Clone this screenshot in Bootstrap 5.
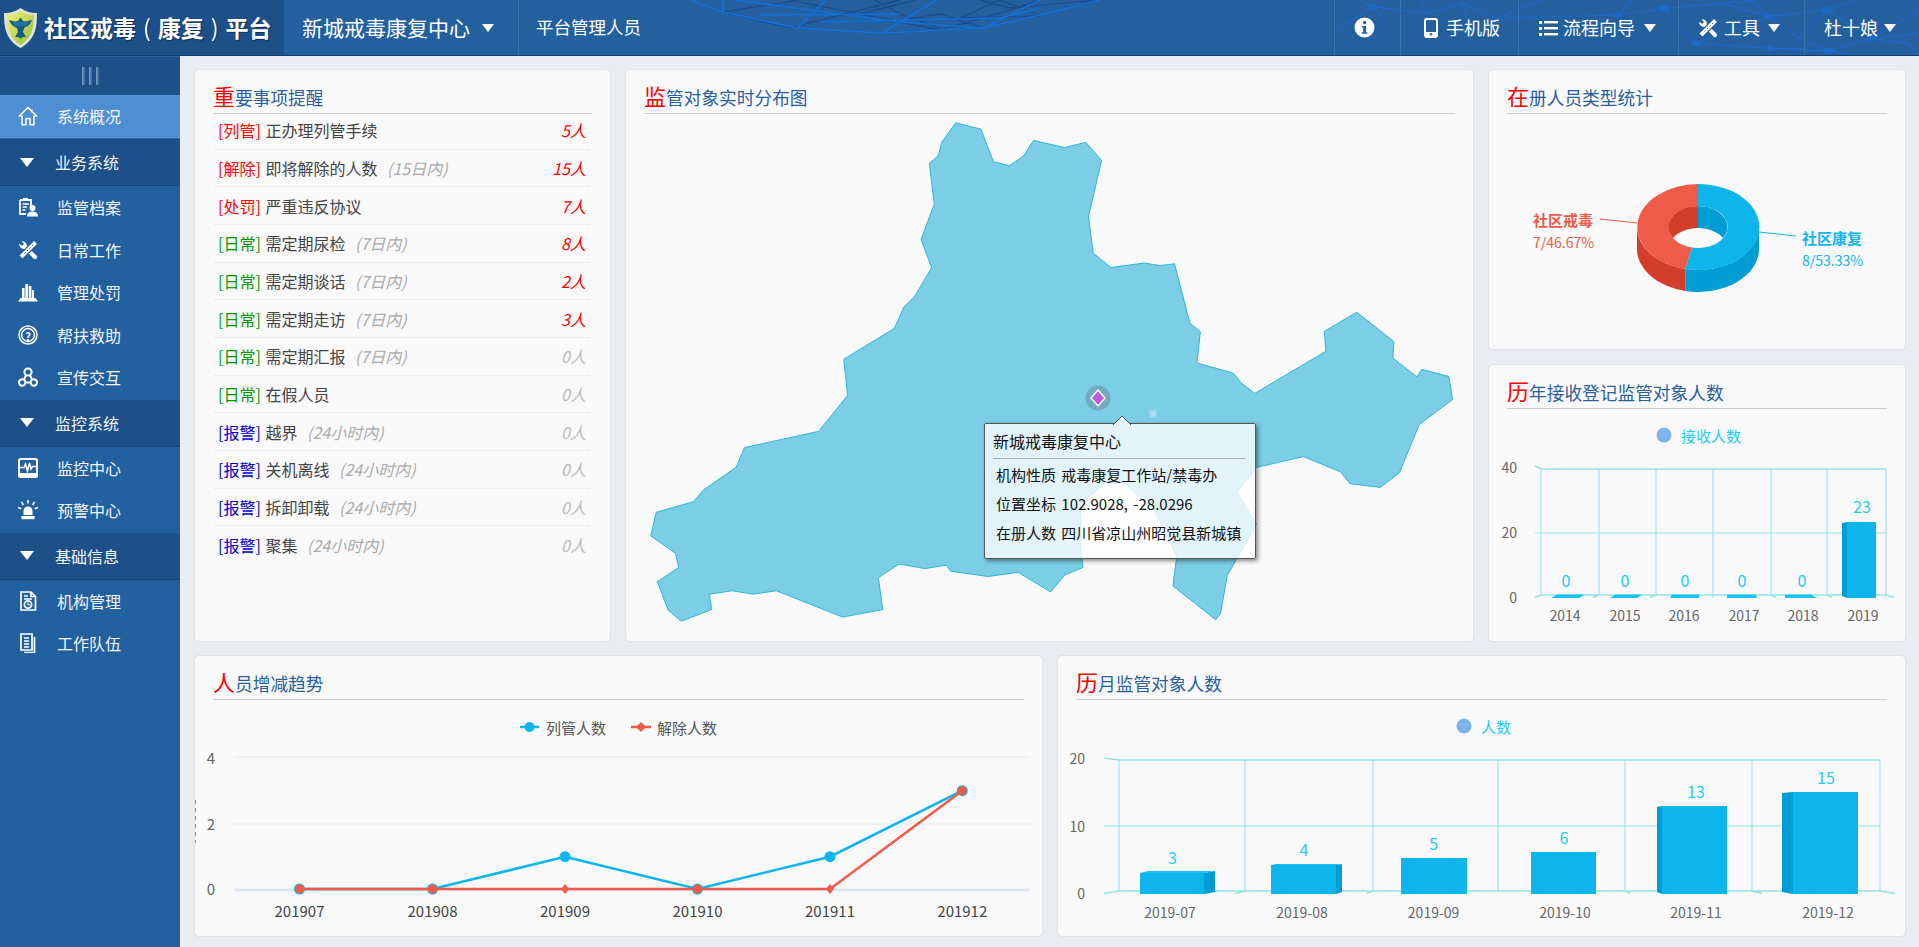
<!doctype html>
<html lang="zh-CN">
<head>
<meta charset="utf-8">
<title>社区戒毒(康复)平台</title>
<link href="https://cdn.jsdelivr.net/npm/bootstrap@5.3.0/dist/css/bootstrap.min.css" rel="stylesheet">
<style>
:root{--blue:#245f9e;--dark:#1d4f88;--act:#4e8fd4;--cy:#0eb5ed;--re:#ef5b49;}
html,body{height:100%;}
body{font-family:"Noto Sans CJK SC","Liberation Sans",sans-serif;background:#e9edf2;color:#444;overflow:hidden;}
.topbar{height:56px;background:var(--blue);border-bottom:1px solid #123c6b;position:relative;flex:none;}
.net{position:absolute;left:0;top:0;pointer-events:none;}
.brand{width:284px;background:var(--dark);color:#fff;font-size:23px;font-weight:700;padding-left:4px;gap:7px;position:relative;text-shadow:1px 1px 1px #0c2f5c;white-space:nowrap;}
.brand .par{padding:0 7px;font-weight:400;}
.tnav{position:relative;color:#fff;font-size:18px;border-left:1px solid #3a74ae;height:55px;white-space:nowrap;}
.tnav.dropdown-toggle::after{border-top:8px solid #fff;border-left:6px solid transparent;border-right:6px solid transparent;border-bottom:0;margin-left:6px;}
.tn-org{width:234px;padding-left:18px;font-size:21px;border-left:0;}
.tn-org.dropdown-toggle::after{margin-left:12px;}
.tn-role{padding-left:17px;font-size:17.5px;}
.tn-i{width:66px;padding-left:19px;}
.tn-m{width:118px;padding-left:23px;gap:8px;}
.tn-f{width:160px;padding-left:20px;gap:5px;}
.tn-f.dropdown-toggle::after{margin-left:4px;}
.tn-t{width:126px;padding-left:19px;gap:6px;}
.tn-t.dropdown-toggle::after{margin-left:2px;}
.tn-u{width:115px;padding-left:19px;}
.side{width:180px;background:#23609f;color:#fff;flex:none;font-size:16px;}
.tog{height:39px;background:var(--dark);border-top:1px solid #2a659f;gap:4px;}
.tog i{display:block;width:3px;height:18px;background:linear-gradient(90deg,#7fa2c8,#2f649c);}
.side .list-group-item{background:transparent;border:0;border-radius:0;color:#f2f6fb;padding:0 0 0 18px;height:42.5px;display:flex;align-items:center;gap:19px;}
.side .list-group-item svg{flex:none;}
.side .list-group-item.active{background:var(--act);height:43px;border-bottom:1px solid #5d9bdc;}
.side .grp{background:var(--dark)!important;height:48px!important;padding-left:20px!important;gap:21px!important;border-top:1px solid #27609b!important;border-bottom:1px solid #194476!important;}
.cdown{width:0;height:0;border-top:9px solid #fff;border-left:7px solid transparent;border-right:7px solid transparent;}
.main{padding:13px 13px 0 14px;gap:13px;min-width:0;}
.toprow{height:573px;gap:14px;}
.botrow{height:282px;gap:14px;}
.panel{background:#f9f9f9;border:1px solid #dfe3e6;border-radius:5px;position:relative;box-shadow:0 0 1px rgba(0,0,0,.06);overflow:hidden;}
.w1{width:417px;}.w2{width:849px;}.w3{width:418px;gap:14px;}
.ph1{height:281px;flex:none;}.ph2{height:278px;flex:none;}
.ptitle{margin:0 18px;padding-top:10px;height:44px;line-height:31px;border-bottom:1px solid #ccc;font-size:17.7px;color:#2a5f9e;font-weight:400;white-space:nowrap;}
.ptitle b{color:#f00;font-size:22px;font-weight:400;}
.plist{margin:-2px 20px 0;background:transparent;}
.plist .list-group-item{background:transparent;height:37.67px;padding:0 4px 0 3px;border:0;border-bottom:1px dotted #ddd;font-size:16px;color:#444;display:flex;align-items:center;justify-content:space-between;white-space:nowrap;}
.tr{color:#f00}.tg{color:#090}.tb{color:#00c}
.tr,.tg,.tb{margin-right:1px;}
.plist em{color:#aaa;margin-left:6px;}
.val{font-style:italic;color:#f00}.val.z{color:#bbb}
.panel svg text{dominant-baseline:central;font-family:"Noto Sans CJK SC","Liberation Sans",sans-serif;}
.gl{stroke:#93e2ea;stroke-width:1;fill:none;}
.tip{position:absolute;left:358px;top:353px;width:272px;height:136px;background:rgba(255,255,255,.78);border:1px solid #555;border-radius:2px;box-shadow:2px 2px 4px rgba(0,0,0,.45);padding:0 10px 0 8px;color:#111;}
.tip svg{position:absolute;left:127px;top:-9px;}
.tip h6{height:35px;line-height:35px;margin:0;font-size:16px;font-weight:400;border-bottom:1px solid #aaa;color:#111;}
.tip div{line-height:29px;font-size:15px;padding-left:3px;white-space:nowrap;word-spacing:2px;}
.tip div:first-of-type{margin-top:1px;}
</style>
</head>
<body class="d-flex flex-column">
<header class="topbar d-flex align-items-center">
  <svg class="net" width="1919" height="55" viewBox="0 0 1919 55">
    <g fill="none" stroke="#1c4c8c" stroke-width="1.3">
      <path d="M723 12 L800 0M723 12 L790 28 L860 10 L900 0M790 0 L860 14 L940 30L1010 10L1040 0M860 14 L915 0M940 28 L900 14 L875 0M983 28 L940 14 L890 22M1000 0 L960 18 L1040 16M1040 15 L1000 0M980 0 L1010 8L1100 0"/>
    </g>
    <g fill="none" stroke="#1270d6" stroke-width="1.6">
      <path d="M690 0 L723 12 L797 28 L882 33 L983 28 L1040 15 L1100 0"/>
      <path d="M723 0 L723 12M797 28 L826 0M882 33 L937 0M983 28 L1040 0"/>
      <path d="M735 0 L900 22 L983 28M820 22 L1000 18 L1040 8M760 15 L900 14"/>
    </g>
    <g transform="translate(1280,0) scale(.408,.333)" fill="none" stroke="#1b6bd0" stroke-width="1.2" opacity=".85">
      <path vector-effect="non-scaling-stroke" d="M140 90 L228 20 L265 70M190 0 L228 20 L360 40 L345 0M360 40 L445 10 L530 55 L640 0M445 10 L470 80M530 55 L830 45 L940 25 L1085 10 L1170 0M830 45 L860 0M940 25 L975 80 L1020 130 L1200 145 L1345 152 L1450 115 L1540 130M1020 130 L1200 50 L1340 30 L1450 115 L1568 100M1085 10 L1200 50 L1270 115 L1345 152M1200 50 L1150 0M1340 30 L1420 0M1340 30 L1270 115M1450 115 L1568 30M1285 145 L1200 145M1345 152 L1400 165M1540 130 L1568 165"/>
      <g fill="#1b6bd0" stroke="none"><ellipse cx="228" cy="20" rx="10" ry="8"/><ellipse cx="940" cy="25" rx="14" ry="10"/><ellipse cx="1200" cy="50" rx="12" ry="8"/><ellipse cx="1340" cy="30" rx="14" ry="10"/><ellipse cx="1450" cy="115" rx="12" ry="9"/><ellipse cx="1020" cy="130" rx="12" ry="9"/><ellipse cx="1345" cy="152" rx="14" ry="9"/><ellipse cx="830" cy="45" rx="10" ry="8"/><ellipse cx="1200" cy="145" rx="9" ry="7"/></g>
    </g>
  </svg>
  <div class="brand h-100 d-flex align-items-center">
    <svg width="33" height="40" viewBox="0 0 33 40">
      <defs><linearGradient id="sh" x1="0" y1="0" x2="1" y2="1"><stop offset="0" stop-color="#f6f46c"/><stop offset="1" stop-color="#8dbf3a"/></linearGradient></defs>
      <path d="M16.5 0C22 4 27 5 33 5 33 20 31 32 16.5 40 2 32 0 20 0 5 6 5 11 4 16.5 0Z" fill="#dfe3d8"/>
      <path d="M16.5 3C21 6 26 7 30 7 30 20 28 30 16.5 37 5 30 3 20 3 7 7 7 12 6 16.5 3Z" fill="url(#sh)"/>
      <path d="M5 12 11 13.5 14 13 16.5 9.5 19 13 22 13.5 28 12C27 15 25 18 20 20L19 24 22 29H18.5L16.5 31 14.5 29H11L14 24 13 20C8 18 6 15 5 12Z" fill="#155a86"/>
      <path d="M8.5 15H24.5M10 17H23" stroke="#3f9cbc" stroke-width=".8"/>
    </svg>
    <span>社区戒毒<span class="par">(</span>康复<span class="par">)</span>平台</span>
  </div>
  <div class="tnav tn-org d-flex align-items-center dropdown-toggle">新城戒毒康复中心</div>
  <div class="tnav tn-role d-flex align-items-center">平台管理人员</div>
  <div class="ms-auto d-flex">
    <div class="tnav tn-i d-flex align-items-center">
      <svg width="21" height="21" viewBox="0 0 21 21"><circle cx="10.5" cy="10.5" r="10" fill="#fff"/><rect x="9" y="4" width="3.2" height="3.2" rx="1.4" fill="#245f9e"/><path d="M7.8 9H12V15.2H13.4V16.8H7.8V15.2H9.2V10.6H7.8Z" fill="#245f9e"/></svg>
    </div>
    <div class="tnav tn-m d-flex align-items-center">
      <svg width="14" height="20" viewBox="0 0 14 20"><rect x="1" y="1" width="12" height="18" rx="2" fill="none" stroke="#fff" stroke-width="2"/><rect x="1" y="14" width="12" height="5" rx="1" fill="#fff"/><circle cx="7" cy="16.3" r="1.2" fill="#245f9e"/></svg>
      <span>手机版</span>
    </div>
    <div class="tnav tn-f d-flex align-items-center dropdown-toggle">
      <svg width="19" height="16" viewBox="0 0 19 16" fill="#fff"><rect x="0" y="1" width="3" height="3"/><rect x="0" y="7" width="3" height="3"/><rect x="0" y="13" width="3" height="3"/><rect x="5" y="1" width="14" height="2.4"/><rect x="5" y="7" width="14" height="2.4"/><rect x="5" y="13" width="14" height="2.4"/></svg>
      <span>流程向导</span>
    </div>
    <div class="tnav tn-t d-flex align-items-center dropdown-toggle">
      <svg width="20" height="20" viewBox="0 0 20 20"><path fill="#fff" d="M1.2 3.5 4 6 6 4 3.5 1.2A5 5 0 0 1 9 6.5L18.5 15.5A2 2 0 0 1 15.5 18.5L6.5 9A5 5 0 0 1 1.2 3.5Z"/><path d="M17.5 2.5 3 17" stroke="#245f9e" stroke-width="6.5"/><path d="M17.5 2.5 3 17" stroke="#fff" stroke-width="4"/><path d="M15 5 5 15" stroke="#245f9e" stroke-width="1" stroke-dasharray="1.5 2"/></svg>
      <span>工具</span>
    </div>
    <div class="tnav tn-u d-flex align-items-center dropdown-toggle">杜十娘</div>
  </div>
</header>
<div class="d-flex flex-grow-1" style="min-height:0">
  <nav class="side">
    <div class="tog d-flex align-items-center justify-content-center"><i></i><i></i><i></i></div>
    <div class="list-group list-group-flush">
      <a class="list-group-item active">
        <svg width="20" height="20" viewBox="0 0 20 20" fill="none" stroke="#fff" stroke-width="1.5" stroke-linejoin="round"><path d="M10 1.5 1.2 10H4V18.8H8V12.5H12V18.8H16V10H18.8ZM14 3.5V6.5"/></svg>
        <span>系统概况</span></a>
      <a class="list-group-item grp"><span class="cdown"></span><span>业务系统</span></a>
      <a class="list-group-item">
        <svg width="20" height="20" viewBox="0 0 20 20"><path d="M2 3H13V10M8 17H2V3" fill="none" stroke="#fff" stroke-width="1.8"/><path d="M5 1H10V4H5Z" fill="#fff"/><path d="M4.5 7H11M4.5 10H9M4.5 13H7.5" stroke="#fff" stroke-width="1.5"/><circle cx="14.5" cy="11" r="3" fill="#fff"/><path d="M9 19.5C9 15.5 12 14.5 14.5 14.5S20 15.5 20 19.5Z" fill="#fff"/></svg>
        <span>监管档案</span></a>
      <a class="list-group-item">
        <svg width="20" height="20" viewBox="0 0 20 20"><path fill="#fff" d="M1.2 3.5 4 6 6 4 3.5 1.2A5 5 0 0 1 9 6.5L18.5 15.5A2 2 0 0 1 15.5 18.5L6.5 9A5 5 0 0 1 1.2 3.5Z"/><path d="M17.5 2.5 3 17" stroke="#23609f" stroke-width="6.5"/><path d="M17.5 2.5 3 17" stroke="#fff" stroke-width="4"/><path d="M15 5 5 15" stroke="#23609f" stroke-width="1" stroke-dasharray="1.5 2"/></svg>
        <span>日常工作</span></a>
      <a class="list-group-item">
        <svg width="20" height="20" viewBox="0 0 20 20" fill="#fff"><rect x="4" y="6" width="2.6" height="10"/><rect x="7.4" y="2" width="2.6" height="14"/><rect x="10.8" y="4" width="2.6" height="12"/><rect x="14" y="8" width="2" height="8"/><path d="M2.5 16H17.5L20 19.5H0Z"/></svg>
        <span>管理处罚</span></a>
      <a class="list-group-item">
        <svg width="20" height="20" viewBox="0 0 20 20" fill="none" stroke="#fff"><circle cx="10" cy="10" r="9" stroke-width="1.5"/><circle cx="10" cy="10" r="6.4" stroke-width="1.5"/><text x="10" y="10.5" font-size="11" font-weight="700" fill="#fff" stroke="none" text-anchor="middle" dominant-baseline="central">?</text></svg>
        <span>帮扶救助</span></a>
      <a class="list-group-item">
        <svg width="20" height="20" viewBox="0 0 20 20" fill="none" stroke="#fff" stroke-width="2"><circle cx="10" cy="5" r="3.6"/><circle cx="4.2" cy="15.5" r="3.2"/><circle cx="15.8" cy="15.5" r="3.2"/><path d="M8.2 8 5.8 12.6M11.8 8 14.2 12.6M7.4 15.5H12.6"/></svg>
        <span>宣传交互</span></a>
      <a class="list-group-item grp"><span class="cdown"></span><span>监控系统</span></a>
      <a class="list-group-item">
        <svg width="20" height="20" viewBox="0 0 20 20"><rect x="1" y="1" width="18" height="18" rx="1.5" fill="none" stroke="#fff" stroke-width="2"/><rect x="1" y="15" width="18" height="4" fill="#fff"/><path d="M2 9.5H6L7.5 6 9.5 13 11.5 5 13 11 14.5 8.5H18" fill="none" stroke="#fff" stroke-width="1.5"/></svg>
        <span>监控中心</span></a>
      <a class="list-group-item">
        <svg width="20" height="20" viewBox="0 0 20 20" fill="#fff"><path d="M5.5 15V11A4.5 4.5 0 0 1 14.5 11V15Z"/><rect x="3.5" y="16" width="13" height="3.2"/><path d="M10 0V3.5M3.5 2 5.5 5M16.5 2 14.5 5M0 7.5 3.2 8.8M20 7.5 16.8 8.8" stroke="#fff" stroke-width="1.6"/></svg>
        <span>预警中心</span></a>
      <a class="list-group-item grp"><span class="cdown"></span><span>基础信息</span></a>
      <a class="list-group-item">
        <svg width="20" height="20" viewBox="0 0 20 20" fill="none" stroke="#fff" stroke-width="1.7"><path d="M3 1H13L17.5 5.5V19H3ZM13 1V5.5H17.5"/><path d="M6 5H10M6 8H14" stroke-width="1.3"/><circle cx="10" cy="13.5" r="3.6"/><path d="M10 11.5V13.7H12" stroke-width="1.1"/></svg>
        <span>机构管理</span></a>
      <a class="list-group-item">
        <svg width="20" height="20" viewBox="0 0 20 20" fill="none" stroke="#fff" stroke-width="1.7"><path d="M3 1H14V17H3Z"/><path d="M6 5H11M6 8H11M6 11H11M6 14H11" stroke-width="1.4"/><path d="M16.5 4V19.5H6"/></svg>
        <span>工作队伍</span></a>
    </div>
  </nav>
  <main class="main flex-grow-1 d-flex flex-column">
    <div class="toprow d-flex">
      <section class="panel w1">
        <h5 class="ptitle"><b>重</b>要事项提醒</h5>
        <ul class="list-group list-group-flush plist">
          <li class="list-group-item"><span><span class="tr">[列管]</span> 正办理列管手续</span><span class="val">5人</span></li>
          <li class="list-group-item"><span><span class="tr">[解除]</span> 即将解除的人数 <em>(15日内)</em></span><span class="val">15人</span></li>
          <li class="list-group-item"><span><span class="tr">[处罚]</span> 严重违反协议</span><span class="val">7人</span></li>
          <li class="list-group-item"><span><span class="tg">[日常]</span> 需定期尿检 <em>(7日内)</em></span><span class="val">8人</span></li>
          <li class="list-group-item"><span><span class="tg">[日常]</span> 需定期谈话 <em>(7日内)</em></span><span class="val">2人</span></li>
          <li class="list-group-item"><span><span class="tg">[日常]</span> 需定期走访 <em>(7日内)</em></span><span class="val">3人</span></li>
          <li class="list-group-item"><span><span class="tg">[日常]</span> 需定期汇报 <em>(7日内)</em></span><span class="val z">0人</span></li>
          <li class="list-group-item"><span><span class="tg">[日常]</span> 在假人员</span><span class="val z">0人</span></li>
          <li class="list-group-item"><span><span class="tb">[报警]</span> 越界 <em>(24小时内)</em></span><span class="val z">0人</span></li>
          <li class="list-group-item"><span><span class="tb">[报警]</span> 关机离线 <em>(24小时内)</em></span><span class="val z">0人</span></li>
          <li class="list-group-item"><span><span class="tb">[报警]</span> 拆卸卸载 <em>(24小时内)</em></span><span class="val z">0人</span></li>
          <li class="list-group-item"><span><span class="tb">[报警]</span> 聚集 <em>(24小时内)</em></span><span class="val z">0人</span></li>
        </ul>
      </section>
      <section class="panel w2">
        <h5 class="ptitle"><b>监</b>管对象实时分布图</h5>
        <svg class="d-block" width="847" height="527" viewBox="626 114 847 527">
          <g transform="translate(620,60) scale(.5485,.3759)">
            <path vector-effect="non-scaling-stroke" fill="#7bcee5" stroke="#2fb5d8" stroke-width="1" d="M612 167 658 184 681 271 710 281 736 255 754 214 811 233 849 219 878 267 854 417 863 514 895 552 956 540 985 547 1011 542 1039 700 1058 723 1052 806 1118 833 1132 858 1157 887 1287 775 1284 722 1343 671 1411 749 1409 793 1453 843 1462 823 1511 842 1518 903 1457 970 1421 1098 1386 1137 1331 1127 1314 1096 1246 1055 1160 1084 1125 1150 1160 1235 1107 1372 1095 1472 1086 1489 1008 1399 1015 1320 975 1200 920 1125 885 1125 840 1180 840 1300 844 1350 811 1370 785 1415 726 1363 671 1374 603 1360 595 1344 556 1353 509 1341 471 1377 479 1462 406 1482 285 1412 242 1421 205 1412 163 1421 167 1462 112 1493 88 1464 68 1388 107 1350 101 1312 56 1266 66 1203 134 1175 152 1144 212 1083 227 1031 362 988 415 892 408 796 500 714 518 656 536 632 568 553 549 477 573 383 564 275 580 255 587 218Z"/>
          </g>
          <circle cx="1098" cy="398" r="12.5" fill="#6e9db4" fill-opacity=".75"/>
          <path d="M1098 390 1105 398 1098 406 1091 398Z" fill="#b85fe0" stroke="#fff" stroke-width="1.4"/>
          <rect x="1149.5" y="410.5" width="7" height="7" fill="#a6ddef"/>
        </svg>
        <div class="tip">
          <svg width="20" height="10" viewBox="0 0 20 10"><path d="M1 10 10 1 19 10" fill="#e3f1f6" stroke="#555"/></svg>
          <h6>新城戒毒康复中心</h6>
          <div>机构性质 戒毒康复工作站/禁毒办</div>
          <div>位置坐标 102.9028, -28.0296</div>
          <div>在册人数 四川省凉山州昭觉县新城镇</div>
        </div>
      </section>
      <div class="w3 d-flex flex-column">
        <section class="panel ph1">
          <h5 class="ptitle"><b>在</b>册人员类型统计</h5>
          <svg class="d-block" width="416" height="236" viewBox="1489 114 416 236">
            <path d="M1759 227V249A61 43 0 0 1 1685.3 291V269A61 43 0 0 0 1759 227Z" fill="#009dd4"/>
            <path d="M1637 227V249A61 43 0 0 0 1685.3 291V269A61 43 0 0 1 1637 227Z" fill="#d33e2b"/>
            <path d="M1698 184A61 43 0 1 1 1685.3 269L1691.9 247.5A29.4 21 0 1 0 1698 206Z" fill="#0eb5ed"/>
            <path d="M1698 184A61 43 0 0 0 1685.3 269L1691.9 247.5A29.4 21 0 0 1 1698 206Z" fill="#ef5b49"/>
            <path d="M1698 206A29.4 21 0 0 1 1698 248Z" fill="#009dd4"/>
            <path d="M1698 206A29.4 21 0 0 0 1698 248Z" fill="#d33e2b"/>
            <path d="M1673 238A29.4 21 0 0 1 1723 238A29.4 21 0 0 1 1673 238Z" fill="#f9f9f9"/>
            <path d="M1600 219 1637 223" stroke="#ef5b49" stroke-width="1" fill="none"/>
            <path d="M1759 232 1796 236" stroke="#0eb5ed" stroke-width="1" fill="none"/>
            <text x="1533" y="219" font-size="15" font-weight="700" fill="#ef5b49">社区戒毒</text>
            <text x="1533" y="242" font-size="14" fill="#ef5b49">7/46.67%</text>
            <text x="1802" y="237" font-size="15" font-weight="700" fill="#0eb5ed">社区康复</text>
            <text x="1802" y="260" font-size="14" fill="#0eb5ed">8/53.33%</text>
          </svg>
        </section>
        <section class="panel ph2">
          <h5 class="ptitle"><b>历</b>年接收登记监管对象人数</h5>
          <svg class="d-block" width="416" height="233" viewBox="1489 408 416 233">
            <circle cx="1664" cy="434" r="7.5" fill="#7fb3ec"/>
            <text x="1681" y="434" font-size="15" fill="#22cdf0">接收人数</text>
            <g class="gl">
              <path stroke-width="1.4" d="M1535 465 1541 468H1886"/>
              <path d="M1541 468V594M1599 468V594M1656 468V594M1713 468V594M1771 468V594M1827 468V594M1886 468V594"/>
              <path d="M1535 532H1886"/>
              <path stroke-width="1.4" d="M1535 596.5 1541 594H1886L1894 596.5M1593 596.5 1599 594M1650 596.5 1656 594M1713 596.5V594M1771 594 1776 596.5M1827 594 1832 596.5"/>
            </g>
            <g fill="#1bc1f3">
              <path d="M1551 597 1557 593.5H1585L1579 597Z"/><path d="M1610 597 1615 593.5H1642L1637 597Z"/><path d="M1670 597 1672 593.5H1699V597Z"/><path d="M1727 597V593.5H1756L1757 597Z"/><path d="M1785 597V593.5H1811L1817 597Z"/>
            </g>
            <path d="M1842 522 1847 521V597L1842 595Z" fill="#009dd4"/>
            <rect x="1847" y="521" width="29" height="76" fill="#0eb5ed"/>
            <g font-size="16" fill="#22cdf0" text-anchor="middle">
              <text x="1566" y="579">0</text><text x="1625" y="579">0</text><text x="1685" y="579">0</text><text x="1742" y="579">0</text><text x="1802" y="579">0</text><text x="1862" y="505">23</text>
            </g>
            <g font-size="14" fill="#666" text-anchor="end"><text x="1517" y="466">40</text><text x="1517" y="531">20</text><text x="1517" y="596">0</text></g>
            <g font-size="14" fill="#666" text-anchor="middle"><text x="1565" y="614">2014</text><text x="1625" y="614">2015</text><text x="1684" y="614">2016</text><text x="1744" y="614">2017</text><text x="1803" y="614">2018</text><text x="1863" y="614">2019</text></g>
          </svg>
        </section>
      </div>
    </div>
    <div class="botrow d-flex">
      <section class="panel w2">
        <h5 class="ptitle"><b>人</b>员增减趋势</h5>
        <svg class="d-block" width="847" height="236" viewBox="195 700 847 236">
          <path d="M195.5 800V843" stroke="#7f8fc4" stroke-dasharray="4 4" fill="none"/>
          <path d="M520 727H539" stroke="#0eb5ed" stroke-width="2.5"/><circle cx="529.5" cy="727" r="5" fill="#0eb5ed"/>
          <text x="546" y="727" font-size="15" fill="#555">列管人数</text>
          <path d="M631 727H651" stroke="#ef5b49" stroke-width="2.5"/><path d="M641 722 646 727 641 732 636 727Z" fill="#ef5b49"/>
          <text x="657" y="727" font-size="15" fill="#555">解除人数</text>
          <path d="M234 757H1030M234 824H1030" stroke="#eee" stroke-width="1.5" fill="none"/>
          <path d="M234 890H1030" stroke="#dde3f2" stroke-width="2.5" fill="none"/>
          <g font-size="15" fill="#666" text-anchor="middle"><text x="211" y="757">4</text><text x="211" y="823">2</text><text x="211" y="888">0</text></g>
          <path d="M299.5 889 432.5 889 565 856.7 697.5 889 830 856.7 962.3 790.7" fill="none" stroke="#0eb5ed" stroke-width="2.5"/>
          <g fill="#0eb5ed"><circle cx="299.5" cy="889" r="5.5"/><circle cx="432.5" cy="889" r="5.5"/><circle cx="565" cy="856.7" r="5.5"/><circle cx="697.5" cy="889" r="5.5"/><circle cx="830" cy="856.7" r="5.5"/><circle cx="962.3" cy="790.7" r="5.5"/></g>
          <path d="M299.5 889H830L962.3 790.7" fill="none" stroke="#ef5b49" stroke-width="2.5"/>
          <g fill="#ef5b49"><circle cx="299.5" cy="889" r="4.5"/><circle cx="432.5" cy="889" r="4.5"/><circle cx="697.5" cy="889" r="4.5"/><circle cx="962.3" cy="790.7" r="4.5"/><path d="M565 884 569 889 565 894 561 889Z"/><path d="M830 884 834 889 830 894 826 889Z"/></g>
          <g font-size="15" fill="#444" text-anchor="middle"><text x="299.5" y="910">201907</text><text x="432.5" y="910">201908</text><text x="565" y="910">201909</text><text x="697.5" y="910">201910</text><text x="830" y="910">201911</text><text x="962.3" y="910">201912</text></g>
        </svg>
      </section>
      <section class="panel w2">
        <h5 class="ptitle"><b>历</b>月监管对象人数</h5>
        <svg class="d-block" width="847" height="236" viewBox="1058 700 847 236">
          <circle cx="1464" cy="726" r="7.5" fill="#7fb3ec"/>
          <text x="1481" y="726" font-size="15" fill="#22cdf0">人数</text>
          <g class="gl">
            <path stroke-width="1.4" d="M1104 758 1119 760H1880"/>
            <path d="M1119 760V891M1245 760V891M1373 760V891M1498 760V891M1625 760V891M1752 760V891M1880 760V891"/>
            <path d="M1104 826H1880"/>
            <path stroke-width="1.4" d="M1104 893.5 1119 891H1880L1895 893.5M1235 893.5 1245 891M1367 893.5 1373 891M1625 891 1630 893.5M1752 891 1762 893.5"/>
          </g>
          <path d="M1204 873 1215 871V892L1204 894Z" fill="#009dd4"/>
          <path d="M1140 873 1148 871H1215L1204 873Z" fill="#1bc1f3"/>
          <rect x="1140" y="873" width="64" height="21" fill="#0eb5ed"/>
          <path d="M1336 865 1342 864V892L1336 894Z" fill="#009dd4"/>
          <path d="M1271 865 1276 864H1342L1336 865Z" fill="#1bc1f3"/>
          <rect x="1271" y="865" width="65" height="29" fill="#0eb5ed"/>
          <rect x="1401" y="858" width="66" height="36" fill="#0eb5ed"/>
          <rect x="1531" y="852" width="65" height="42" fill="#0eb5ed"/>
          <path d="M1657 807 1662 806V894L1657 892Z" fill="#009dd4"/>
          <rect x="1662" y="806" width="65" height="88" fill="#0eb5ed"/>
          <path d="M1782 793 1793 792V894L1782 892Z" fill="#009dd4"/>
          <rect x="1793" y="792" width="65" height="102" fill="#0eb5ed"/>
          <g font-size="16" fill="#22cdf0" text-anchor="middle"><text x="1172.5" y="857">3</text><text x="1304" y="849">4</text><text x="1433.6" y="843">5</text><text x="1564" y="837">6</text><text x="1696" y="791">13</text><text x="1826" y="777">15</text></g>
          <g font-size="14" fill="#666" text-anchor="end"><text x="1085" y="758">20</text><text x="1085" y="826">10</text><text x="1085" y="893">0</text></g>
          <g font-size="14" fill="#666" text-anchor="middle"><text x="1170" y="912">2019-07</text><text x="1302" y="912">2019-08</text><text x="1433.6" y="912">2019-09</text><text x="1565" y="912">2019-10</text><text x="1696" y="912">2019-11</text><text x="1828" y="912">2019-12</text></g>
        </svg>
      </section>
    </div>
  </main>
</div>
<script src="https://cdn.jsdelivr.net/npm/bootstrap@5.3.0/dist/js/bootstrap.bundle.min.js"></script>
</body>
</html>
